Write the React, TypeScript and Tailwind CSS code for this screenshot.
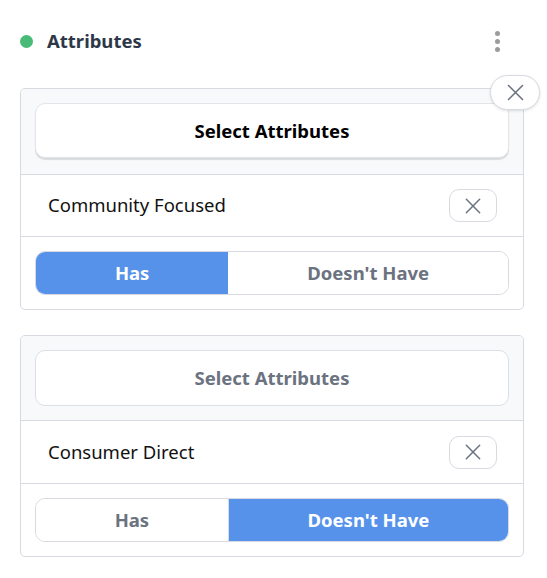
import React from "react";

const font = { fontFamily: '"Noto Sans", "Open Sans", sans-serif' };

function XIcon({ size = 18 }: { size?: number }) {
  return (
    <svg width={size} height={size} viewBox="0 0 24 24" fill="none" stroke="currentColor" strokeWidth={1.8} strokeLinecap="round">
      <path d="M4 4 L20 20 M20 4 L4 20" />
    </svg>
  );
}

function Card({
  label,
  raised,
  has,
  showClose,
}: {
  label: string;
  raised: boolean;
  has: boolean;
  showClose?: boolean;
}) {
  return (
    <div className="relative rounded-[5px] border border-[#d7dae0] bg-white">
      {showClose && (
        <button className="absolute right-[-17px] top-[-14px] flex h-[35px] w-[50px] items-center justify-center rounded-full border border-[#d7dae0] bg-white text-[#6b7280] shadow-[0_1px_3px_rgba(0,0,0,0.12)]">
          <XIcon size={21} />
        </button>
      )}
      <div className={"rounded-t-[5px] border-b border-[#d7dae0] bg-[#f8f9fb] px-[14px] pt-[14px] " + (raised ? "pb-[16px]" : "pb-[14px]")}>
        <button
          className={
            raised
              ? "flex h-[55px] w-full items-center justify-center rounded-[10px] border border-[#e2e4e8] bg-white text-[18.5px] font-bold text-black shadow-[0_2px_1px_rgba(0,0,0,0.12)]"
              : "flex h-[56px] w-full items-center justify-center rounded-[10px] border border-[#dcdfe4] bg-white text-[18.5px] font-bold text-[#6b7280]"
          }
        >
          Select Attributes
        </button>
      </div>
      <div className={"flex items-center justify-between border-b border-[#d7dae0] pl-[27px] pr-[26px] " + (raised ? "h-[62px]" : "h-[63px]")}>
        <span className="-mt-[1px] text-[18.5px] text-[#111]">{label}</span>
        <button className="flex h-[33px] w-[48px] items-center justify-center rounded-[10px] border border-[#d7dae0] bg-white text-[#6b7280]">
          <XIcon size={20} />
        </button>
      </div>
      <div className="px-[14px] pb-[14px] pt-[14px]">
        <div className="flex h-[44px] w-full overflow-hidden rounded-[10px] border border-[#d7dae0]">
          <div
            className={
              has
                ? "flex flex-auto items-center justify-center bg-[#5692ea] text-[18.5px] font-bold text-white"
                : "flex flex-auto items-center justify-center border-r border-[#d7dae0] bg-white text-[18.5px] font-bold text-[#6b7280]"
            }
          >
            Has
          </div>
          <div
            className={
              has
                ? "flex flex-auto items-center justify-center bg-white text-[18.5px] font-bold text-[#6b7280]"
                : "flex flex-auto items-center justify-center bg-[#5692ea] text-[18.5px] font-bold text-white"
            }
          >
            Doesn't Have
          </div>
        </div>
      </div>
    </div>
  );
}

export default function App() {
  return (
    <div className="min-h-[578px] w-[547px] bg-white pl-[20px] pr-[23px] pt-[21px]" style={font}>
      <div className="flex h-10 items-center justify-between">
        <div className="flex items-center">
          <span className="h-[13px] w-[13px] rounded-full bg-[#48bb78]" />
          <span className="ml-[14px] text-[18.5px] font-bold text-[#2d3748]">Attributes</span>
        </div>
        <div className="mr-[15px] flex w-6 flex-col items-center gap-[3px]">
          <span className="h-[5px] w-[5px] rounded-full bg-[#9b9b9b]" />
          <span className="h-[5px] w-[5px] rounded-full bg-[#9b9b9b]" />
          <span className="h-[5px] w-[5px] rounded-full bg-[#9b9b9b]" />
        </div>
      </div>
      <div className="mt-[27px] flex flex-col gap-[25px]">
        <Card label="Community Focused" raised has showClose />
        <Card label="Consumer Direct" raised={false} has={false} />
      </div>
    </div>
  );
}
